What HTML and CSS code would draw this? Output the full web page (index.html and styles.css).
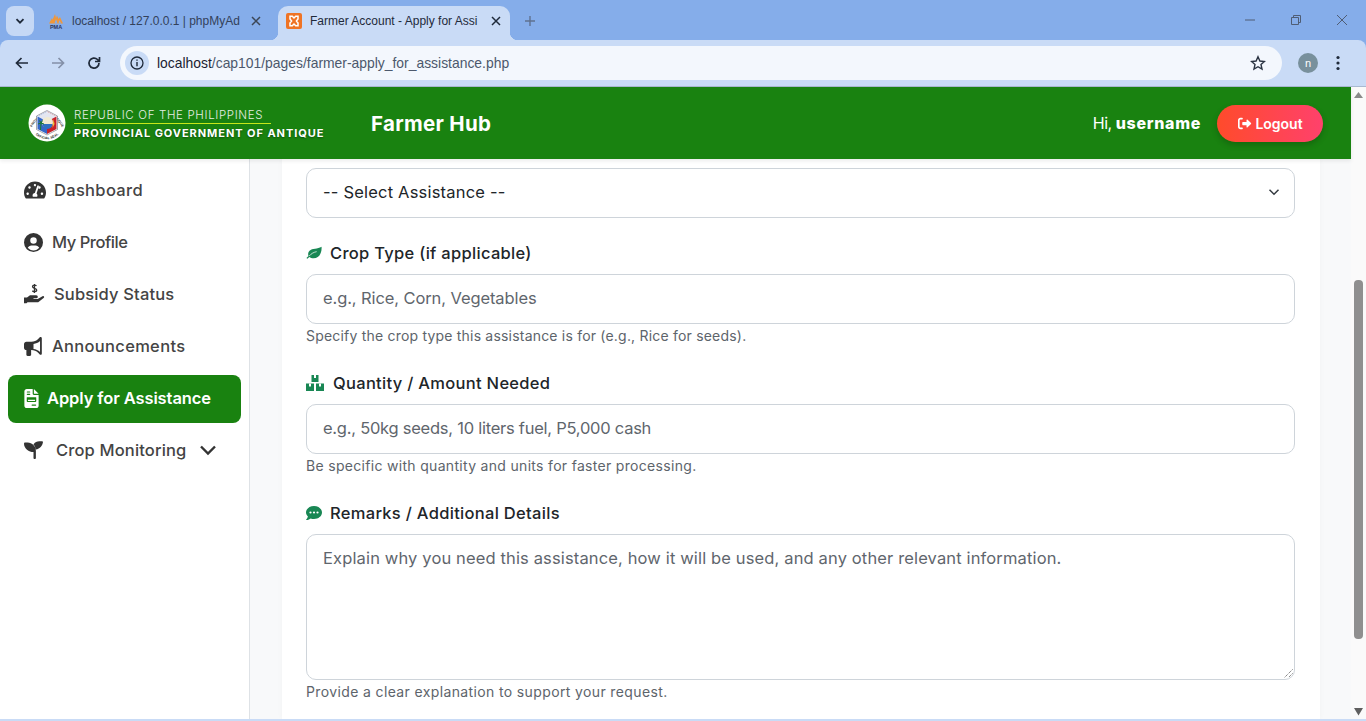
FILE: index.html
```html
<!DOCTYPE html>
<html lang="en">
<head>
<meta charset="utf-8">
<title>Farmer Account - Apply for Assistance</title>
<link rel="stylesheet" href="styles.css">
</head>
<body>
<div class="tabstrip">
  <button class="tabsearch"><svg width="12" height="12" viewBox="0 0 12 12"><path d="M2.500 4.200 6 7.700l3.500-3.500" fill="none" stroke="#1f2a3a" stroke-width="1.800"/></svg></button>
  <div class="tab">
    <svg class="favicon" width="16" height="16" viewBox="0 0 16 16"><path d="M1 10.500 4 5l.5 2L7 1l1 4 1-2.500 1.500 3.500L12 4l3 6.500z" fill="#f0973a"/><path d="M6.500 10.500 8 6l1.500 4.500zM10.500 10.500 11.500 7l1.500 3.500z" fill="#85adea"/><text class="pma" x="8" y="15.500" text-anchor="middle">PMA</text></svg>
    <span class="tabtitle">localhost / 127.0.0.1 | phpMyAd</span>
    <svg class="tabx" width="10" height="10" viewBox="0 0 10 10"><path d="M1 1l8 8M9 1l-8 8" stroke="#3c4656" stroke-width="1.500"/></svg>
  </div>
  <div class="tab active">
    <svg class="favicon" width="16" height="16" viewBox="0 0 16 16"><rect width="16" height="16" rx="2" fill="#ef7425"/><path d="M4 3.200h2.300L8 5l1.700-1.800H12V6l-1.600 2 1.600 2v2.800H9.700L8 11l-1.700 1.800H4V10l1.600-2L4 6z" fill="none" stroke="#fff" stroke-width="1.500"/></svg>
    <span class="tabtitle">Farmer Account - Apply for Assi</span>
    <svg class="tabx" width="10" height="10" viewBox="0 0 10 10"><path d="M1 1l8 8M9 1l-8 8" stroke="#1f2a3a" stroke-width="1.500"/></svg>
  </div>
  <svg class="newtab" width="12" height="12" viewBox="0 0 12 12"><path d="M6 1v10M1 6h10" stroke="#5f7190" stroke-width="1.400"/></svg>
  <div class="winctrl">
    <svg width="12" height="12" viewBox="0 0 12 12"><path d="M1 6h10" stroke="#4f5d74" stroke-width="1"/></svg>
    <svg width="12" height="12" viewBox="0 0 12 12"><path d="M1.500 3.500h7v7h-7zM3.500 3.500v-2h7v7h-2" fill="none" stroke="#4f5d74" stroke-width="1"/></svg>
    <svg width="12" height="12" viewBox="0 0 12 12"><path d="M1 1l10 10M11 1 1 11" stroke="#4f5d74" stroke-width="1"/></svg>
  </div>
</div>
<div class="toolbar">
  <svg width="16" height="16" viewBox="0 0 16 16"><path d="M14 8H3M7.500 3 2.500 8l5 5" fill="none" stroke="#1f2a3a" stroke-width="1.700"/></svg>
  <svg width="16" height="16" viewBox="0 0 16 16"><path d="M2 8h11M8.500 3l5 5-5 5" fill="none" stroke="#8490a8" stroke-width="1.700"/></svg>
  <svg width="16" height="16" viewBox="0 0 16 16"><path d="M13 8a5 5 0 1 1-1.500-3.500L13.500 6.500M13.500 2v4.500H9" fill="none" stroke="#1f2a3a" stroke-width="1.700"/></svg>
  <div class="omnibox">
    <span class="siteinfo"><svg width="14" height="14" viewBox="0 0 14 14"><circle cx="7" cy="7" r="6" fill="none" stroke="#1f2a3a" stroke-width="1.300"/><path d="M7 6v4.200M7 3.600v1.200" stroke="#1f2a3a" stroke-width="1.400"/></svg></span>
    <span class="url"><b>localhost</b>/cap101/pages/farmer-apply_for_assistance.php</span>
    <svg class="star" width="16" height="16" viewBox="0 0 16 16"><path d="M8 1.800l1.900 4.200 4.500.5-3.400 3 1 4.500L8 11.700 4 14l1-4.500-3.400-3 4.500-.5z" fill="none" stroke="#2a3342" stroke-width="1.400"/></svg>
  </div>
  <span class="avatar">n</span>
  <svg width="4" height="16" viewBox="0 0 4 16"><circle cx="2" cy="2.500" r="1.600" fill="#1f2a3a"/><circle cx="2" cy="8" r="1.600" fill="#1f2a3a"/><circle cx="2" cy="13.500" r="1.600" fill="#1f2a3a"/></svg>
</div>
<div class="viewport">
  <div class="page">
    <header class="topbar">
      <div class="brand">
        <svg class="seal" width="38" height="38" viewBox="0 0 38 38">
          <defs>
            <path id="ringtop" d="M3.500 25a16 16 0 0 1 31 0"/>
            <path id="ringbot" d="M6 28.500a16 16 0 0 0 26 0"/>
          </defs>
          <circle cx="19" cy="19" r="18.500" fill="#fff"/>
          <text class="sealtext"><textPath href="#ringtop" startOffset="50%" text-anchor="middle">PROVINCE OF ANTIQUE</textPath></text>
          <text class="sealtext"><textPath href="#ringbot" startOffset="50%" text-anchor="middle">OFFICIAL SEAL</textPath></text>
          <path d="M19 6.500 29.500 12v13.500L19 31 8.500 25.500V12z" fill="#fff" stroke="#223" stroke-width=".4"/>
          <path d="M19 7.500 9.500 12.500V25L19 30z" fill="#3566c8"/>
          <path d="M19 7.500l9.500 5V25L19 30z" fill="#c8202a"/>
          <path d="M19 7.500l9.500 5-9.500 5-9.500-5z" fill="#e4e6f0"/>
          <circle cx="19.500" cy="18.500" r="5.500" fill="#f1ead2"/>
          <path d="M14.500 20h10a5 5 0 0 1-10 0z" fill="#2f6fc0"/>
          <path d="M12.500 26 13 19M13 19l-3 1M13 19l3 1M13 19l-1.500-2.500M13 19l1.500-2.500" stroke="#1c7a2c" stroke-width="1" fill="none"/>
          <path d="M25.500 15l1 5-2 4z" fill="#f0c53a"/>
        </svg>
        <div class="brandtext">
          <span class="republic">REPUBLIC OF THE PHILIPPINES</span>
          <span class="province">PROVINCIAL GOVERNMENT OF ANTIQUE</span>
        </div>
      </div>
      <h1 class="hub">Farmer Hub</h1>
      <div class="hello">Hi, <strong>username</strong></div>
      <button class="logout"><svg width="15" height="13" viewBox="0 0 512 512"><path fill="#fff" d="M377 105l135 135c9 9 9 23 0 32L377 407c-15 15-41 4-41-17v-70H192c-13 0-24-11-24-24v-80c0-13 11-24 24-24h144v-70c0-21 26-32 41-17zM160 96H96c-18 0-32 14-32 32v256c0 18 14 32 32 32h64c18 0 32 14 32 32s-14 32-32 32H96c-53 0-96-43-96-96V128C0 75 43 32 96 32h64c18 0 32 14 32 32s-14 32-32 32z"/></svg>Logout</button>
    </header>
    <div class="body">
      <nav class="sidebar">
        <a class="navitem gap-dash wide"><svg width="22" height="20" viewBox="0 0 576 512"><path d="M288 32C129 32 0 161 0 320c0 53 14 102 39 145 6 9 16 15 28 15h442c12 0 22-6 28-15 25-43 39-92 39-145C576 161 447 32 288 32zm0 64c15 0 27 11 31 25-1 2-2 5-3 7l-10 29c-5 2-12 3-18 3-18 0-32-14-32-32s14-32 32-32zM96 384c-18 0-32-14-32-32s14-32 32-32 32 14 32 32-14 32-32 32zm48-160c-18 0-32-14-32-32s14-32 32-32 32 14 32 32-14 32-32 32zm246-60-62 186c14 12 24 30 24 50 0 11-3 22-8 32H232c-5-10-8-21-8-32 0-33 27-62 60-64l62-186c4-12 17-19 30-15s18 17 14 29zm16 60c-12 0-22-7-28-16l18-48c3-1 7-0 10 0 18 0 32 14 32 32s-14 32-32 32zm64 160c-18 0-32-14-32-32s14-32 32-32 32 14 32 32-14 32-32 32z"/></svg><span>Dashboard</span></a>
        <a class="navitem tight"><svg width="19" height="19" viewBox="0 0 512 512"><path d="M256 0a256 256 0 1 0 0 512 256 256 0 0 0 0-512zm0 112a88 88 0 1 1 0 176 88 88 0 0 1 0-176zm0 360c-62 0-118-28-155-72 17-38 55-64 99-64h112c44 0 82 26 99 64-37 44-93 72-155 72z"/></svg><span>My Profile</span></a>
        <a class="navitem gap-dash"><svg width="22" height="20" viewBox="0 0 22 20"><path d="M12.500 1.800c-.6-.5-1.300-.7-2-.7-1 0-2 .5-2 1.500 0 2.200 4.200 1.300 4.200 3.500 0 1-1 1.600-2.100 1.600-.8 0-1.600-.3-2.300-.8M10.500 0v9" fill="none" stroke="#333" stroke-width="1.300"/><path d="M0 13.500h3l3-2.200h6.300a1.500 1.500 0 0 1 0 3H9.500v.7h4.200l4.800-2.800c1.400-.7 2.300 1 1.100 1.800l-5.400 4.300H3.500l-1 .9H0z"/></svg><span>Subsidy Status</span></a>
        <a class="navitem wide"><svg width="19" height="19" viewBox="0 0 512 512"><path d="M480 32c0-13-8-25-20-30s-26-2-35 7l-44 44c-48 48-113 75-181 75H64c-35 0-64 29-64 64v96c0 35 29 64 64 64v128c0 18 14 32 32 32h64c18 0 32-14 32-32V352h8c68 0 133 27 181 75l44 44c9 9 23 12 35 7s20-17 20-30V32zm-48 74v300c-50-45-110-72-176-80V186c66-8 126-35 176-80z"/></svg><span>Announcements</span></a>
        <a class="navitem active"><svg width="15" height="19" viewBox="0 0 384 512"><path fill="#fff" d="M64 0C29 0 0 29 0 64v384c0 35 29 64 64 64h256c35 0 64-29 64-64V160H256c-18 0-32-14-32-32V0zm192 0v128h128zM64 80c0-9 7-16 16-16h64c9 0 16 7 16 16s-7 16-16 16H80c-9 0-16-7-16-16zm0 64c0-9 7-16 16-16h64c9 0 16 7 16 16s-7 16-16 16H80c-9 0-16-7-16-16zm16 80h224c18 0 16 16 16 32v64c0 18-14 32-32 32H96c-18 0-32-14-32-32v-64c0-16-2-32 16-32zm16 64v32h192v-32zm208 128c9 0 16 7 16 16s-7 16-16 16h-96c-9 0-16-7-16-16s7-16 16-16z"/></svg><span>Apply for Assistance</span></a>
        <a class="navitem gap-crop"><svg width="19" height="19" viewBox="0 0 512 512"><path d="M512 32c0 113-84 207-193 222-7-52-30-99-64-136C289 61 352 32 416 32h64c18 0 32 14 32 32zM0 96c0-18 14-32 32-32h64c124 0 224 100 224 224v192c0 18-14 32-32 32s-32-14-32-32V320C132 320 0 220 0 96z" transform="translate(0 -24)"/></svg><span>Crop Monitoring</span><svg class="caret" width="18" height="12" viewBox="0 0 18 12"><path d="M2 2.500 9 9.500l7-7" fill="none" stroke="#333" stroke-width="2.400"/></svg></a>
      </nav>
      <main class="main">
        <form class="card">
          <div class="selectbox"><span>-- Select Assistance --</span><svg width="12" height="12" viewBox="0 0 16 16"><path d="M2 5l6 6 6-6" fill="none" stroke="#343a40" stroke-width="2"/></svg></div>
          <div class="field">
            <label class="lbl"><svg width="16" height="14" viewBox="0 0 18 15"><path d="M17.500.5c.5 6-2 13-9 13-2 0-3.500-.5-4.800-1.500L1.500 14 .5 13l2.300-2C2 9 2.500 6.500 4 5c3-3 9-1.500 13.500-4.500z" fill="#198754"/><path d="M3.500 11C6 8 9 6.500 12 6" stroke="#fff" stroke-width=".8" fill="none"/></svg><span>Crop Type (if applicable)</span></label>
            <div class="input ph ph-crop">e.g., Rice, Corn, Vegetables</div>
            <p class="hint hint-crop">Specify the crop type this assistance is for (e.g., Rice for seeds).</p>
          </div>
          <div class="field">
            <label class="lbl lbl-q"><svg width="18" height="16" viewBox="0 0 18 16"><path d="M5.500 0h7v7h-7zM0 8.500h8V16H0zM10 8.500h8V16h-8z" fill="#198754"/><path d="M8 0h2v3H8zM3 8.500h2v3H3zM13 8.500h2v3h-2z" fill="#fff"/></svg><span>Quantity / Amount Needed</span></label>
            <div class="input ph ph-qty">e.g., 50kg seeds, 10 liters fuel, P5,000 cash</div>
            <p class="hint">Be specific with quantity and units for faster processing.</p>
          </div>
          <div class="field">
            <label class="lbl"><svg width="16" height="14" viewBox="0 0 16 14"><path d="M8 0c4.400 0 8 2.900 8 6.500S12.400 13 8 13c-1.200 0-2.300-.2-3.300-.6C3.800 13.200 2.300 14 .5 14c-.3 0-.5-.3-.3-.6.700-.7 1.400-1.800 1.700-3C.700 9.300 0 8 0 6.500 0 2.900 3.600 0 8 0z" fill="#198754"/><circle cx="4.500" cy="6.500" r="1.100" fill="#fff"/><circle cx="8" cy="6.500" r="1.100" fill="#fff"/><circle cx="11.500" cy="6.500" r="1.100" fill="#fff"/></svg><span>Remarks / Additional Details</span></label>
            <div class="textarea ph">Explain why you need this assistance, how it will be used, and any other relevant information.<svg class="grip" width="9" height="9" viewBox="0 0 9 9"><path d="M8.500.5l-8 8M8.500 4.500l-4 4" stroke="#555" stroke-width="1" stroke-dasharray="1 1"/></svg></div>
            <p class="hint hint-wide">Provide a clear explanation to support your request.</p>
          </div>
        </form>
      </main>
    </div>
  </div>
  <div class="scrollbar">
    <svg width="15" height="15" viewBox="0 0 15 15"><path d="M3 11 7.500 5l4.500 6z" fill="#8a8a8a"/></svg>
    <div class="track"><div class="thumb"></div></div>
    <svg width="15" height="15" viewBox="0 0 15 15"><path d="M3 4l4.500 7.500L12 4z" fill="#5f5f5f"/></svg>
  </div>
</div>
</body>
</html>
```
FILE: styles.css
```css
* { box-sizing: border-box; }
html, body { margin: 0; height: 721px; overflow: hidden; }
body { font-family: "Inter", "Liberation Sans", sans-serif; background: #85adea; color: #212529; }
button { border: 0; font: inherit; }
svg { flex: none; display: block; }

.tabstrip { height: 40px; background: #85adea; display: flex; align-items: flex-start; padding: 6px 0 0 6px; }
.tabsearch { width: 28px; height: 30px; background: #c5d8f5; border-radius: 8px; display: flex; align-items: center; justify-content: center; padding: 0; flex: none; }
.tab { width: 230px; height: 34px; padding: 0 9px 4px 8px; display: flex; align-items: center; gap: 8px; margin-left: 6px; font: 12px "Liberation Sans", sans-serif; color: #33415a; border-radius: 10px 10px 0 0; position: relative; flex: none; }
.tab + .tab { width: 232px; margin-left: 8px; }
.tab.active { background: #c9dbf6; color: #1f2a3a; }
.tab.active::before, .tab.active::after { content: ""; position: absolute; bottom: 0; width: 8px; height: 8px; }
.tab.active::before { left: -8px; background: radial-gradient(circle at 0 0, transparent 8px, #c9dbf6 8.500px); }
.tab.active::after { right: -8px; background: radial-gradient(circle at 100% 0, transparent 8px, #c9dbf6 8.500px); }
.tabtitle { flex: 1; white-space: nowrap; }
.pma { font: 700 5.500px "Liberation Sans", sans-serif; fill: #2b3560; }
.newtab { margin: 9px 0 0 14px; }
.winctrl { margin-left: auto; display: flex; gap: 34px; padding: 8px 18px 0 0; }

.toolbar { height: 47px; background: #c9dbf6; border-radius: 8px 8px 0 0; border-bottom: 1px solid #a9b9d1; display: flex; align-items: center; padding: 0 19px 1px 14px; gap: 20px; }
.omnibox { width: 1162px; height: 34px; margin-left: -2px; background: #f3f7fd; border-radius: 17px; display: flex; align-items: center; padding: 0 16px 0 5px; }
.siteinfo { width: 24px; height: 24px; border-radius: 50%; background: #c9dbf6; display: flex; align-items: center; justify-content: center; margin-right: 8px; }
.url { flex: 1; font: 13.900px "Liberation Sans", sans-serif; color: #4c586c; }
.url b { font-weight: 400; color: #1a2231; }
.avatar { width: 20px; height: 20px; margin-left: -4px; border-radius: 50%; background: #78909c; color: #fff; font: 11px/20px "Liberation Sans", sans-serif; text-align: center; }
.toolbar > svg:last-child { margin-left: -2px; }

.viewport { height: 634px; display: flex; border-bottom: 2px solid #c9dbf6; background: #fff; }
.page { width: 1351px; height: 632px; display: flex; flex-direction: column; }
.scrollbar { width: 15px; background: #fafafa; display: flex; flex-direction: column; }
.track { flex: 1; padding: 178px 2px 65px; }
.thumb { height: 100%; background: #8f8f8f; border-radius: 4px; width: 9px; margin-left: 1px; }

.topbar { height: 72px; background: #198210; display: flex; align-items: center; padding: 0 28px; color: #fff; box-shadow: 0 2px 4px rgba(0,0,0,.08); position: relative; flex: none; }
.brand { display: flex; align-items: center; gap: 8px; width: 343px; }
.sealtext { font: 700 3.300px "Liberation Sans", sans-serif; fill: #222; }
.brandtext { display: flex; flex-direction: column; padding-top: 3px; }
.republic { font-size: 11.500px; font-weight: 300; letter-spacing: .65px; line-height: 14px; width: 197px; border-bottom: 1px solid #c6e818; white-space: nowrap; color: #e6eee4; padding-bottom: 1px; }
.province { font-size: 11px; font-weight: 700; letter-spacing: .94px; line-height: 16px; margin-top: 1px; white-space: nowrap; text-shadow: 0 1px 2px rgba(0,0,0,.4); }
.hub { margin: 0; padding-top: 2px; flex: 1; font-size: 20.500px; font-weight: 700; line-height: 24px; letter-spacing: .3px; }
.hello { font-size: 16px; letter-spacing: -.5px; margin-right: 16px; }
.hello strong { font-weight: 800; letter-spacing: .7px; }
.logout { width: 106px; height: 37px; border-radius: 19px; background: linear-gradient(90deg, #ff4b2b, #ff416c); color: #fff; font-size: 14px; font-weight: 600; display: flex; align-items: center; justify-content: center; gap: 3px; box-shadow: 0 3px 6px rgba(0,0,0,.2); }

.body { flex: 1; display: flex; min-height: 0; }
.sidebar { width: 250px; background: #fff; border-right: 1px solid #dee2e6; padding: 8px 8px; display: flex; flex-direction: column; gap: 4px; flex: none; }
.navitem { height: 48px; display: flex; align-items: center; gap: 9px; padding: 0 16px 2px; border-radius: 8px; color: #444; font-size: 16.500px; font-weight: 500; letter-spacing: .15px; white-space: nowrap; }
.navitem svg { fill: #333; }
.navitem.tight { letter-spacing: -.45px; }
.navitem.wide { letter-spacing: .32px; }
.navitem.gap-dash { gap: 8px; }
.navitem.gap-crop { gap: 13px; }
.navitem.active { background: #198210; color: #fff; font-weight: 600; gap: 8px; letter-spacing: -.1px; }
.caret { margin-left: auto; margin-right: 8px; }

.main { flex: 1; background: #f8f9fa; padding: 0 31px 0 32px; min-width: 0; overflow: hidden; }
.card { background: #fff; padding: 9px 25px 0 24px; height: 100%; overflow: hidden; box-shadow: 0 0 6px rgba(0,0,0,.03); }
.selectbox, .input { height: 50px; border: 1px solid #ced4da; border-radius: 10px; display: flex; align-items: center; padding: 0 16px 2px; font-size: 16.500px; line-height: 24px; }
.selectbox { justify-content: space-between; color: #212529; letter-spacing: .2px; padding-right: 14px; }
.field { margin-top: 23px; padding-bottom: 2px; }
.lbl { display: flex; align-items: center; gap: 8px; height: 24px; margin-bottom: 9px; font-size: 16.500px; font-weight: 500; letter-spacing: .3px; color: #212529; }
.lbl-q { gap: 9px; }
.ph { color: #5f666d; }
.ph-crop { letter-spacing: -.1px; }
.ph-qty { letter-spacing: -.25px; }
.textarea { height: 146px; border: 1px solid #ced4da; border-radius: 10px; padding: 11px 16px; font-size: 16.500px; line-height: 24px; letter-spacing: .14px; position: relative; }
.grip { position: absolute; right: 1px; bottom: 1px; }
.hint { margin: 1px 0 0; font-size: 14px; line-height: 21px; letter-spacing: .31px; color: #5d646b; }
.hint-crop { letter-spacing: .2px; }
.hint-wide { letter-spacing: .37px; }
```
